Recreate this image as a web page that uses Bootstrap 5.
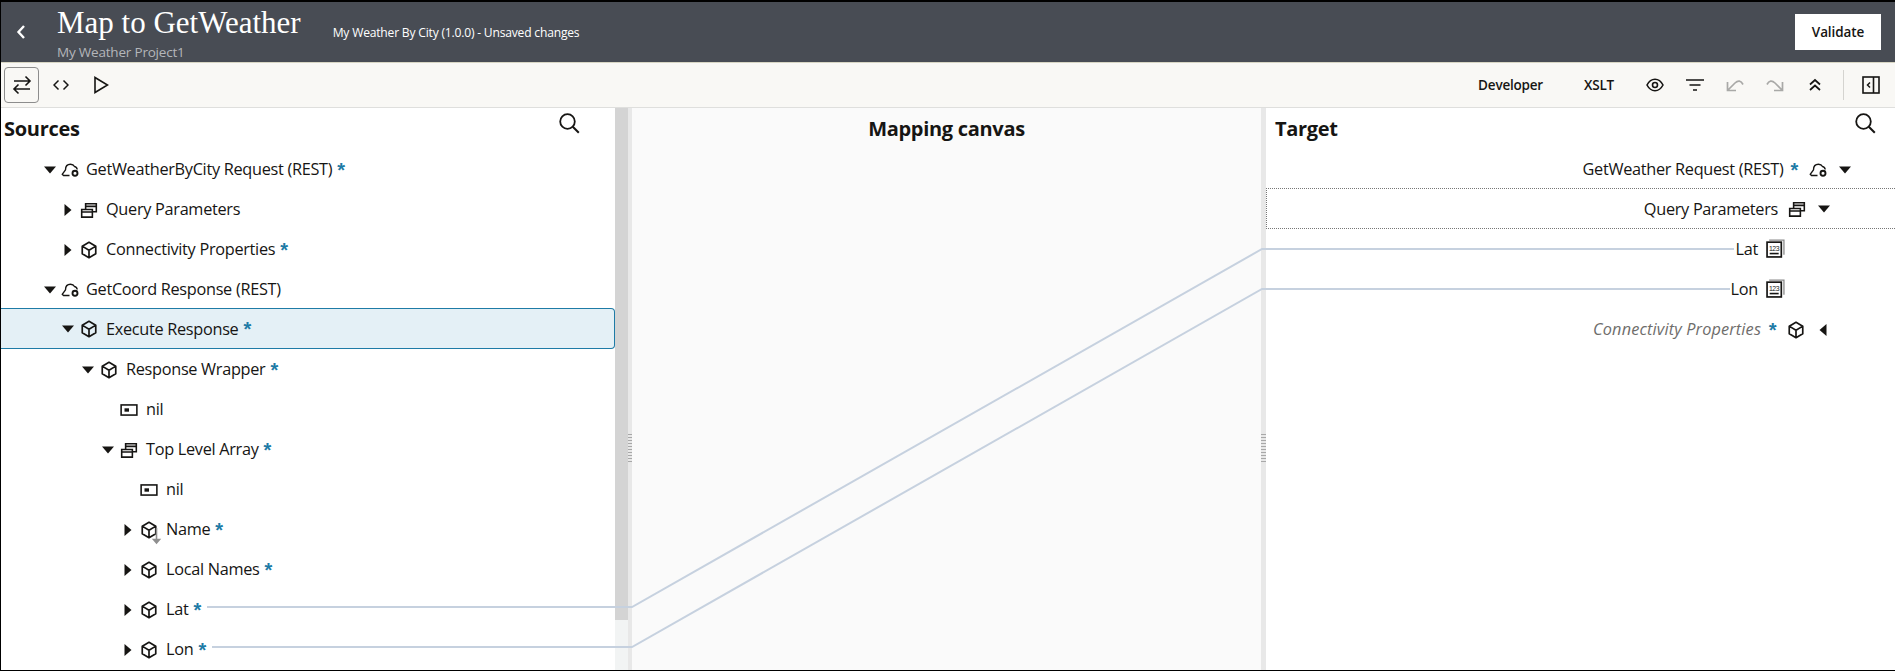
<!DOCTYPE html>
<html lang="en">
<head>
    <meta charset="UTF-8">
    <title>Map to GetWeather</title>
    <link href="https://cdn.jsdelivr.net/npm/bootstrap@5.3.0/dist/css/bootstrap.min.css" rel="stylesheet">
    <style>
        html, body { height: 100%; overflow: hidden; }
        body { font-family: "Open Sans", "Liberation Sans", sans-serif; font-size: 16.3px; letter-spacing: -0.3px; color: #161513; background: #fff; }
        .flex-none { flex: none; }
        .app-frame { height: 671px; border: solid #000; border-width: 2px 0 1px 1px; }
        .app-head { height: 61px; background: #484c54; border-bottom: 1px solid #d8d6c4; color: #fff; }
        .back-btn { width: 56px; }
        .back-ico { margin-right: 17px; }
        .app-title { font-family: "Liberation Serif", serif; font-size: 31px; line-height: 34px; letter-spacing: 0; margin: 4px 0 0; font-weight: 400; }
        .app-sub { font-size: 13.5px; line-height: 16px; color: #b4b6ba; letter-spacing: -0.2px; margin-top: 4px; }
        .app-state { font-size: 12.1px; margin: 0 0 0 32px; padding-top: 22px; letter-spacing: -0.2px; align-self: flex-start; }
        .validate-btn { background: #fff; color: #161513; border: 0; border-radius: 0; width: 86px; height: 36px; font-size: 13.5px; font-weight: 600; letter-spacing: -0.1px; margin-right: 14px; padding: 0; }
        .tool-bar { height: 45px; background: #f9f8f5; border-bottom: 1px solid #dfdfdd; padding: 0 0 0 3px; }
        .tool-on { width: 35px; height: 36px; border: 1px solid #8d8d8d; border-radius: 4px; margin-right: 2px; }
        .tool-btn { width: 40px; height: 36px; }
        .tool-word { font-size: 13.5px; font-weight: 600; letter-spacing: -0.2px; }
        .word-xslt { margin: 0 21px 0 41px; }
        .tool-sep { width: 1px; height: 30px; background: #d5d4d0; margin: 0 7px 0 8px; }
        .map-area { height: 562px; }
        .src-pane { width: 614px; }
        .pane-head { height: 41px; }
        .pane-name { font-size: 20px; font-weight: 700; letter-spacing: -0.3px; margin: 0; line-height: 42px; }
        .src-name { padding-left: 3px; }
        .tgt-name { padding-left: 9px; }
        .search-l { margin: 4px 35px 0 0; }
        .search-r { margin: 4px 19px 0 0; }
        .scroll-bar { width: 13px; background: #f2f4f4; }
        .scroll-thumb { height: 512px; background: #d4d4d4; }
        .split-bar { width: 4px; background: #e8e8e8; }
        .split-wide { width: 5px; }
        .split-grip { width: 100%; height: 30px; margin-top: 325px; background: radial-gradient(#a8a8a8 40%, transparent 45%) 0 0 / 2px 3px; }
        .canvas-pane { background: #fafafa; }
        .canvas-name { font-size: 20px; font-weight: 700; letter-spacing: -0.3px; line-height: 42px; margin: 0; }
        .tgt-pane { width: 629px; }
        .tree-row { height: 40px; white-space: nowrap; padding-top: 1px; }
        .lvl-1 { padding-left: 41px; }
        .lvl-2 { padding-left: 59px; }
        .lvl-3 { padding-left: 79px; }
        .lvl-4 { padding-left: 99px; }
        .lvl-5 { padding-left: 119px; }
        .row-picked { height: 41px; margin-top: -1px; background: #e4f0f6; border: 1px solid #1e7ba6; border-left: 0; border-radius: 0 4px 4px 0; }
        .tw-slot { width: 16px; height: 16px; flex: none; }
        .ico-slot { width: 18px; height: 18px; margin: 0 8px 0 4px; flex: none; }
        .ico-cloud { width: 20px; margin: 0 5px 0 3px; }
        .req-mark { color: #1e7ba6; font-family: "Liberation Sans", sans-serif; font-weight: 700; margin-left: 5px; font-size: 20px; line-height: 1; }
        .tgt-box { border: dotted #777; border-width: 1px 0 1px 1px; margin-top: -1px; height: 41px; }
        .end-1 { padding-right: 42px; }
        .end-2 { padding-right: 63px; }
        .end-3 { padding-right: 110px; }
        .end-4 { padding-right: 64px; }
        .tgt-pane .req-mark { margin: 0 1px 0 7px; }
        .tgt-pane .ico-slot { margin: 0 0 0 10px; }
        .tgt-pane .ico-cloud { margin: 0 -2px 0 10px; }
        .tgt-pane .tw-slot { margin-left: 10px; }
        .ico-num { width: 19px; height: 19px; margin: 0 0 3px 8px; flex: none; }
        .muted-row { color: #6e6d6b; font-style: italic; letter-spacing: 0.15px; }
        .wire-layer { position: absolute; left: 0; top: 0; pointer-events: none; }
    </style>
</head>
<body>
    <svg width="0" height="0" class="d-block">
        <symbol id="i-cube" viewBox="0 0 16 16"><path d="M8 1.200 14 4.600v6.800L8 14.800 2 11.400V4.600zM2.300 4.800 8 8.200l5.700-3.400M8 8.200v6.400" fill="none" stroke="#161513" stroke-width="1.500" stroke-linejoin="round"/></symbol>
        <symbol id="i-stack" viewBox="0 0 16 16"><path d="M1.500 7.500H11v6.800H1.500zM1.500 9.800H11M5 7.500V2.500h9.500v7H11M5 4.800h9.500" fill="none" stroke="#161513" stroke-width="1.400"/></symbol>
        <symbol id="i-cloud" viewBox="0 0 20 16"><path d="M8.500 13.500H2.500L1.200 12.300 4.500 7.800C4.500 4.800 6 2.200 9.500 2.200c2 0 3.300 .9 4 2.300 1.600 .3 2.500 1.400 2.700 3" fill="none" stroke="#161513" stroke-width="1.400" stroke-linejoin="round"/><circle cx="14" cy="11.300" r="2.500" fill="none" stroke="#161513" stroke-width="1.900"/></symbol>
        <symbol id="i-field" viewBox="0 0 16 16"><rect x="1" y="3.500" width="14" height="9" fill="none" stroke="#161513" stroke-width="1.400"/><rect x="4" y="6.500" width="4" height="3" fill="#161513"/></symbol>
        <symbol id="i-search" viewBox="0 0 22 22"><circle cx="9.500" cy="9.500" r="7.300" fill="none" stroke="#161513" stroke-width="1.800"/><path d="m14.800 14.800 6 6" stroke="#161513" stroke-width="2"/></symbol>
        <symbol id="c-down" viewBox="0 0 16 16"><path d="M2 4.500h12L8 11.500z" fill="#161513"/></symbol>
        <symbol id="c-right" viewBox="0 0 16 16"><path d="M4.500 2v12l7-6z" fill="#161513"/></symbol>
        <symbol id="c-left" viewBox="0 0 16 16"><path d="M11.500 2v12l-7-6z" fill="#161513"/></symbol>
    </svg>

    <div class="app-frame d-flex flex-column">
        <header class="app-head d-flex align-items-center flex-none">
            <div class="back-btn d-flex justify-content-center">
                <svg width="14" height="18" viewBox="0 0 14 18" class="back-ico"><path d="M10 3 4.500 9l5.500 6" fill="none" stroke="#fff" stroke-width="2.400"/></svg>
            </div>
            <div class="align-self-start">
                <h1 class="app-title">Map to GetWeather</h1>
                <div class="app-sub">My Weather Project1</div>
            </div>
            <p class="app-state">My Weather By City (1.0.0) - Unsaved changes</p>
            <button type="button" class="btn validate-btn ms-auto">Validate</button>
        </header>

        <div class="tool-bar d-flex align-items-center flex-none">
            <div class="tool-on d-flex align-items-center justify-content-center">
                <svg width="20" height="20" viewBox="0 0 20 20"><path d="M2 6h16M13.500 1.500 18 6l-4.500 4.500M18 14H2M6.500 9.500 2 14l4.500 4.500" fill="none" stroke="#161513" stroke-width="1.600"/></svg>
            </div>
            <div class="tool-btn d-flex align-items-center justify-content-center">
                <svg width="16" height="12" viewBox="0 0 16 12"><path d="M5.500 1.500 1 6l4.500 4.500M10.500 1.500 15 6l-4.500 4.500" fill="none" stroke="#161513" stroke-width="1.500"/></svg>
            </div>
            <div class="tool-btn d-flex align-items-center justify-content-center">
                <svg width="16" height="18" viewBox="0 0 16 18"><path d="M2 1.500v15L14.500 9z" fill="none" stroke="#161513" stroke-width="1.600"/></svg>
            </div>
            <div class="ms-auto d-flex align-items-center">
                <span class="tool-word">Developer</span>
                <span class="tool-word word-xslt">XSLT</span>
                <div class="tool-btn d-flex align-items-center justify-content-center">
                    <svg width="18" height="14" viewBox="0 0 18 14"><path d="M1 7c2-3.800 4.800-5.700 8-5.700s6 1.900 8 5.700c-2 3.800-4.800 5.700-8 5.700S3 10.800 1 7z" fill="none" stroke="#161513" stroke-width="1.600"/><circle cx="9" cy="7" r="2.500" fill="none" stroke="#161513" stroke-width="1.600"/></svg>
                </div>
                <div class="tool-btn d-flex align-items-center justify-content-center">
                    <svg width="18" height="14" viewBox="0 0 18 14"><path d="M0 2h18M3.500 7h11M7 12h4" stroke="#161513" stroke-width="1.700"/></svg>
                </div>
                <div class="tool-btn d-flex align-items-center justify-content-center">
                    <svg width="18" height="14" viewBox="0 0 18 14"><path d="M1.500 4v8.500H10M1.500 12.500 9 5c3-2.800 6-2.500 8 1.500" fill="none" stroke="#a9a9a7" stroke-width="1.700"/></svg>
                </div>
                <div class="tool-btn d-flex align-items-center justify-content-center">
                    <svg width="18" height="14" viewBox="0 0 18 14"><path d="M16.500 4v8.500H8M16.500 12.500 9 5C6 2.200 3 2.500 1 6.500" fill="none" stroke="#a9a9a7" stroke-width="1.700"/></svg>
                </div>
                <div class="tool-btn d-flex align-items-center justify-content-center">
                    <svg width="14" height="14" viewBox="0 0 14 14"><path d="M2 6.500 7 2l5 4.500M2 12 7 7.500l5 4.500" fill="none" stroke="#161513" stroke-width="1.700"/></svg>
                </div>
                <div class="tool-sep"></div>
                <div class="tool-btn d-flex align-items-center justify-content-center me-1">
                    <svg width="18" height="18" viewBox="0 0 18 18"><rect x="1" y="1" width="16" height="16" fill="none" stroke="#161513" stroke-width="1.600"/><path d="M11.500 1v16" stroke="#161513" stroke-width="1.600"/><path d="M8 6.500 5.500 9 8 11.500" fill="none" stroke="#161513" stroke-width="1.500"/></svg>
                </div>
            </div>
        </div>

        <main class="map-area d-flex position-relative">
            <section class="src-pane overflow-hidden">
                <div class="pane-head d-flex justify-content-between align-items-start">
                    <h2 class="pane-name src-name">Sources</h2>
                    <svg width="22" height="22" class="search-l"><use href="#i-search"/></svg>
                </div>
                <div class="tree-row lvl-1 d-flex align-items-center"><svg class="tw-slot"><use href="#c-down"/></svg><svg class="ico-slot ico-cloud"><use href="#i-cloud"/></svg><span>GetWeatherByCity Request (REST)</span><span class="req-mark">*</span></div>
                <div class="tree-row lvl-2 d-flex align-items-center"><svg class="tw-slot"><use href="#c-right"/></svg><svg class="ico-slot"><use href="#i-stack"/></svg><span>Query Parameters</span></div>
                <div class="tree-row lvl-2 d-flex align-items-center"><svg class="tw-slot"><use href="#c-right"/></svg><svg class="ico-slot"><use href="#i-cube"/></svg><span>Connectivity Properties</span><span class="req-mark">*</span></div>
                <div class="tree-row lvl-1 d-flex align-items-center"><svg class="tw-slot"><use href="#c-down"/></svg><svg class="ico-slot ico-cloud"><use href="#i-cloud"/></svg><span>GetCoord Response (REST)</span></div>
                <div class="tree-row row-picked lvl-2 d-flex align-items-center"><svg class="tw-slot"><use href="#c-down"/></svg><svg class="ico-slot"><use href="#i-cube"/></svg><span>Execute Response</span><span class="req-mark">*</span></div>
                <div class="tree-row lvl-3 d-flex align-items-center"><svg class="tw-slot"><use href="#c-down"/></svg><svg class="ico-slot"><use href="#i-cube"/></svg><span>Response Wrapper</span><span class="req-mark">*</span></div>
                <div class="tree-row lvl-4 d-flex align-items-center"><span class="tw-slot"></span><svg class="ico-slot"><use href="#i-field"/></svg><span>nil</span></div>
                <div class="tree-row lvl-4 d-flex align-items-center"><svg class="tw-slot"><use href="#c-down"/></svg><svg class="ico-slot"><use href="#i-stack"/></svg><span>Top Level Array</span><span class="req-mark">*</span></div>
                <div class="tree-row lvl-5 d-flex align-items-center"><span class="tw-slot"></span><svg class="ico-slot"><use href="#i-field"/></svg><span>nil</span></div>
                <div class="tree-row lvl-5 d-flex align-items-center"><svg class="tw-slot"><use href="#c-right"/></svg><svg class="ico-slot overflow-visible"><use href="#i-cube"/><path d="M16.500 7v13M13.500 18.500l3 3.500 3-3.500z" fill="#8f8f8f" stroke="#8f8f8f" stroke-width="1.600"/></svg><span>Name</span><span class="req-mark">*</span></div>
                <div class="tree-row lvl-5 d-flex align-items-center"><svg class="tw-slot"><use href="#c-right"/></svg><svg class="ico-slot"><use href="#i-cube"/></svg><span>Local Names</span><span class="req-mark">*</span></div>
                <div class="tree-row lvl-5 d-flex align-items-center"><svg class="tw-slot"><use href="#c-right"/></svg><svg class="ico-slot"><use href="#i-cube"/></svg><span>Lat</span><span class="req-mark">*</span></div>
                <div class="tree-row lvl-5 d-flex align-items-center"><svg class="tw-slot"><use href="#c-right"/></svg><svg class="ico-slot"><use href="#i-cube"/></svg><span>Lon</span><span class="req-mark">*</span></div>
            </section>

            <div class="scroll-bar flex-none"><div class="scroll-thumb"></div></div>
            <div class="split-bar flex-none"><div class="split-grip"></div></div>

            <section class="canvas-pane flex-grow-1 text-center">
                <h2 class="canvas-name">Mapping canvas</h2>
            </section>

            <div class="split-bar split-wide flex-none"><div class="split-grip"></div></div>

            <section class="tgt-pane flex-none overflow-hidden">
                <div class="pane-head d-flex justify-content-between align-items-start">
                    <h2 class="pane-name tgt-name">Target</h2>
                    <svg width="22" height="22" class="search-r"><use href="#i-search"/></svg>
                </div>
                <div class="tree-row end-1 d-flex align-items-center justify-content-end"><span>GetWeather Request (REST)</span><span class="req-mark">*</span><svg class="ico-slot ico-cloud"><use href="#i-cloud"/></svg><svg class="tw-slot"><use href="#c-down"/></svg></div>
                <div class="tree-row tgt-box end-2 d-flex align-items-center justify-content-end"><span>Query Parameters</span><svg class="ico-slot"><use href="#i-stack"/></svg><svg class="tw-slot"><use href="#c-down"/></svg></div>
                <div class="tree-row end-3 d-flex align-items-center justify-content-end"><span>Lat</span>
                    <svg class="ico-num" viewBox="0 0 18 18"><rect x="1" y="3" width="13.500" height="14" fill="none" stroke="#161513" stroke-width="1.600"/><path d="M3 1h14v14" fill="none" stroke="#8a8a8a" stroke-width="1.200"/><path d="M3.500 13.800h8.500" stroke="#161513" stroke-width="1.500"/><text x="7.700" y="11" font-size="6.500" text-anchor="middle" font-family="Liberation Sans, sans-serif" letter-spacing="-.3" fill="#161513">123</text></svg>
                </div>
                <div class="tree-row end-3 d-flex align-items-center justify-content-end"><span>Lon</span>
                    <svg class="ico-num" viewBox="0 0 18 18"><rect x="1" y="3" width="13.500" height="14" fill="none" stroke="#161513" stroke-width="1.600"/><path d="M3 1h14v14" fill="none" stroke="#8a8a8a" stroke-width="1.200"/><path d="M3.500 13.800h8.500" stroke="#161513" stroke-width="1.500"/><text x="7.700" y="11" font-size="6.500" text-anchor="middle" font-family="Liberation Sans, sans-serif" letter-spacing="-.3" fill="#161513">123</text></svg>
                </div>
                <div class="tree-row muted-row end-4 d-flex align-items-center justify-content-end"><span>Connectivity Properties</span><span class="req-mark">*</span><svg class="ico-slot"><use href="#i-cube"/></svg><svg class="tw-slot"><use href="#c-left"/></svg></div>
            </section>

            <svg class="wire-layer" width="1894" height="562">
                <polyline points="206,499 631,499 1261,141 1733,141" fill="none" stroke="#c6d1df" stroke-width="2"/>
                <polyline points="211,539 631,539 1261,181 1729,181" fill="none" stroke="#c6d1df" stroke-width="2"/>
            </svg>
        </main>
    </div>

    <script src="https://cdn.jsdelivr.net/npm/bootstrap@5.3.0/dist/js/bootstrap.bundle.min.js"></script>
</body>
</html>
